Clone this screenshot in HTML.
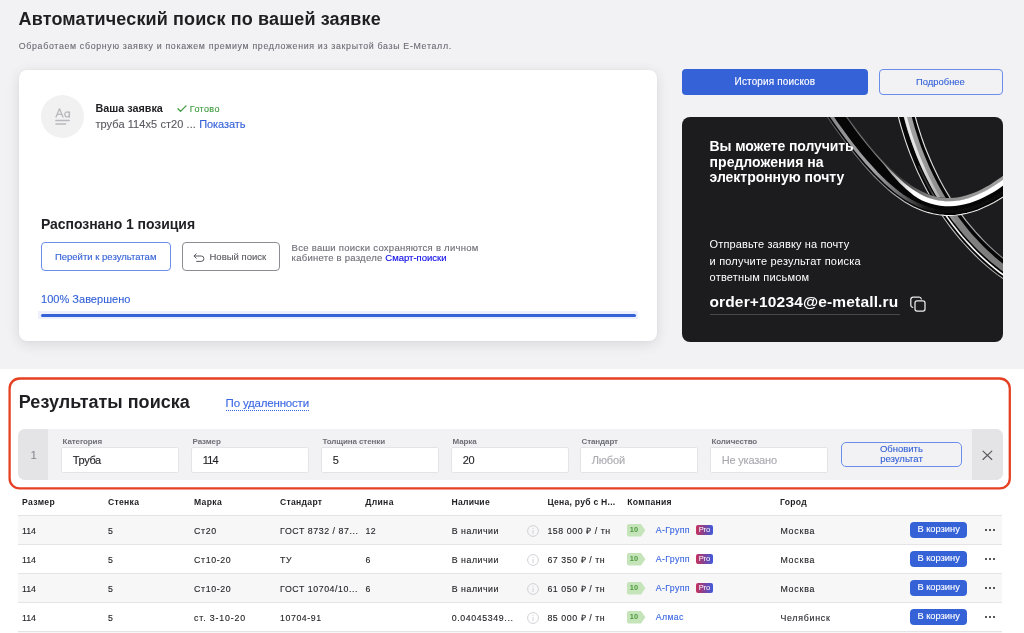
<!DOCTYPE html>
<html lang="ru">
<head>
<meta charset="utf-8">
<title>Автоматический поиск</title>
<style>
*{box-sizing:border-box;margin:0;padding:0}
html,body{width:1024px;height:633px;overflow:hidden}
body{font-family:"Liberation Sans",sans-serif;background:#fff;color:#1f1f23;position:relative}
.abs{position:absolute;white-space:nowrap}
.box{position:absolute}
.k{-webkit-text-stroke:0.12px currentColor}
.row{position:absolute;left:18px;width:984px;height:29px;border-top:1px solid #e4e4e7}
.row.g{background:#f7f7f8}
</style>
</head>
<body>
<div id="w" style="position:absolute;left:0;top:0;width:1024px;height:633px;will-change:transform;opacity:.999">

<div class="box" style="left:0;top:0;width:1024px;height:369px;background:#f2f2f4"></div>
<div class="abs" style="left:18.6px;top:7.86px;font-size:18px;line-height:23px;color:#1f1f23;font-weight:bold;letter-spacing:0.13px;">Автоматический поиск по вашей заявке</div>
<div class="abs k" style="left:18.8px;top:40.85px;font-size:8.8px;line-height:11px;color:#6d6d76;letter-spacing:0.678px;">Обработаем сборную заявку и покажем премиум предложения из закрытой базы Е-Металл.</div>
<div class="box" style="left:18.5px;top:70px;width:638.5px;height:271px;background:#fff;border-radius:8px;box-shadow:0 3px 14px rgba(0,0,0,.11),0 0 2px rgba(0,0,0,.05)"></div>
<div class="box" style="left:41px;top:94.700px;width:43.400px;height:43.400px;border-radius:50%;background:#f1f1f2"></div>
<svg class="abs" style="left:54px;top:106px" width="18" height="20" viewBox="54 106 18 20" fill="none" stroke="#b9b9bd" stroke-width="1.35" stroke-linecap="round" stroke-linejoin="round">
<path d="M56 117 L59.500 108.800 L63 117 M57.200 114.400 H61.800"/>
<path d="M69.400 111.800 V117 M69.400 114.400 A2.300 2.500 0 1 1 64.800 114.400 A2.300 2.500 0 1 1 69.400 114.400"/>
<path d="M55.900 120.500 H69.200 M55.900 124 H65.600" stroke-width="1.4"/>
</svg>
<div class="abs" style="left:95.4px;top:101.46px;font-size:10.8px;line-height:14px;color:#1f1f23;font-weight:bold;letter-spacing:0.01px;">Ваша заявка</div>
<svg class="abs" style="left:176.500px;top:104.500px" width="10" height="8" viewBox="0 0 10 8" fill="none" stroke="#3f9a3f" stroke-width="1.3" stroke-linecap="round" stroke-linejoin="round"><path d="M1 3.800 L3.500 6.400 L9 0.900"/></svg>
<div class="abs k" style="left:189.8px;top:103.38px;font-size:9px;line-height:12px;color:#3f9a3f;letter-spacing:0.367px;">Готово</div>
<div class="abs k" style="left:95.4px;top:117.19px;font-size:11px;line-height:14px;color:#5a5a62;letter-spacing:0.076px;">труба 114х5 ст20 ... <span style="color:#3562d7;letter-spacing:-0.05px">Показать</span></div>
<div class="abs" style="left:41px;top:215.05px;font-size:14px;line-height:18px;color:#1f1f23;font-weight:bold;letter-spacing:-0.055px;">Распознано 1 позиция</div>
<div class="box" style="left:41px;top:242px;width:130.400px;height:29px;border:1px solid #6a8eea;border-radius:4px;background:#fff"></div>
<div class="abs k" style="left:54.9px;top:250.51px;font-size:9.5px;line-height:12px;color:#3562d7;letter-spacing:0.01px;">Перейти к результатам</div>
<div class="box" style="left:182px;top:242px;width:98.200px;height:29px;border:1px solid #8c8c92;border-radius:4px;background:#fff"></div>
<svg class="abs" style="left:193px;top:252.500px" width="12" height="10" viewBox="0 0 12 10" fill="none" stroke="#5a5a62" stroke-width="1" stroke-linecap="round" stroke-linejoin="round"><path d="M3.200 0.800 L1 3 L3.200 5.200 M1.200 3 H8.200 A2.700 2.700 0 0 1 8.200 8.400 H3.600"/></svg>
<div class="abs k" style="left:209.5px;top:250.51px;font-size:9.5px;line-height:12px;color:#5a5a62;letter-spacing:0.01px;">Новый поиск</div>
<div class="abs k" style="left:291.6px;top:242.01px;font-size:9.5px;line-height:12px;color:#6d6d76;letter-spacing:0.267px;">Все ваши поиски сохраняются в личном</div>
<div class="abs k" style="left:291.6px;top:252.11px;font-size:9.5px;line-height:12px;color:#6d6d76;letter-spacing:0.247px;">кабинете в разделе <span style="color:#0a0ae6;letter-spacing:0">Смарт-поиски</span></div>
<div class="abs k" style="left:41px;top:291.99px;font-size:11px;line-height:14px;color:#3562d7;letter-spacing:0.025px;">100% Завершено</div>
<div class="box" style="left:38.400px;top:311.300px;width:599.600px;height:7.500px;background:#edf0fc"></div>
<div class="box" style="left:41px;top:313.800px;width:594.600px;height:3px;background:#3562d7;border-radius:2px"></div>
<div class="box" style="left:682.400px;top:69.100px;width:185.300px;height:25.700px;background:#3562d7;border-radius:4px"></div>
<div class="abs k" style="left:734.6px;top:74.83px;font-size:10px;line-height:13px;color:#fff;letter-spacing:0.14px;">История поисков</div>
<div class="box" style="left:879px;top:69.100px;width:123.500px;height:25.700px;border:1px solid #6a8eea;border-radius:4px"></div>
<div class="abs k" style="left:916.0px;top:75.54px;font-size:9.4px;line-height:12px;color:#3562d7;letter-spacing:0.02px;">Подробнее</div>
<div class="box" style="left:682px;top:116.500px;width:320.500px;height:225.200px;background:#1c1c1e;border-radius:8px;overflow:hidden">
<svg width="321" height="226" viewBox="682 116.500 321 226" style="position:absolute;left:0;top:0">
<defs>
<linearGradient id="aOut" gradientUnits="userSpaceOnUse" x1="830" y1="0" x2="1003" y2="0"><stop offset="0" stop-color="#5a5a5c"/><stop offset="0.3" stop-color="#8a8a8a"/><stop offset="0.5" stop-color="#e0e0e0"/><stop offset="0.65" stop-color="#f4f4f4"/><stop offset="1" stop-color="#e6e6e6"/></linearGradient>
<linearGradient id="aSoft" gradientUnits="userSpaceOnUse" x1="830" y1="0" x2="1003" y2="0"><stop offset="0" stop-color="#8a8a8c"/><stop offset="0.25" stop-color="#a4a4a6"/><stop offset="0.4" stop-color="#6c6c6e"/><stop offset="0.55" stop-color="#1a1a1a"/><stop offset="0.65" stop-color="#0a0a0a"/><stop offset="1" stop-color="#0a0a0a"/></linearGradient>
<linearGradient id="aIn" gradientUnits="userSpaceOnUse" x1="830" y1="0" x2="1003" y2="0"><stop offset="0" stop-color="#5c5c5e"/><stop offset="0.3" stop-color="#858587"/><stop offset="0.4" stop-color="#c8c8c8"/><stop offset="0.48" stop-color="#ffffff"/><stop offset="1" stop-color="#ffffff"/></linearGradient>
<linearGradient id="aTop" gradientUnits="userSpaceOnUse" x1="830" y1="0" x2="1003" y2="0"><stop offset="0" stop-color="#1a1a1a"/><stop offset="0.4" stop-color="#3a3a3a"/><stop offset="0.6" stop-color="#8a8a8a"/><stop offset="1" stop-color="#a0a0a0"/></linearGradient>
<linearGradient id="bOut" gradientUnits="userSpaceOnUse" x1="900" y1="0" x2="1003" y2="0"><stop offset="0" stop-color="#e8e8e8"/><stop offset="0.4" stop-color="#c8c8c8"/><stop offset="1" stop-color="#a8a8a8"/></linearGradient>
<linearGradient id="bWhite" gradientUnits="userSpaceOnUse" x1="900" y1="0" x2="1003" y2="0"><stop offset="0" stop-color="#0a0a0a"/><stop offset="0.3" stop-color="#3a3a3a"/><stop offset="0.45" stop-color="#f4f4f4"/><stop offset="1" stop-color="#ffffff"/></linearGradient>
<linearGradient id="bGray" gradientUnits="userSpaceOnUse" x1="900" y1="0" x2="1003" y2="0"><stop offset="0" stop-color="#a8a8a8"/><stop offset="0.25" stop-color="#989898"/><stop offset="0.5" stop-color="#848484"/><stop offset="1" stop-color="#7a7a7a"/></linearGradient>
<linearGradient id="bHi" gradientUnits="userSpaceOnUse" x1="900" y1="0" x2="1003" y2="0"><stop offset="0" stop-color="#f2f2f2"/><stop offset="0.22" stop-color="#dedede"/><stop offset="0.42" stop-color="#a0a0a0"/><stop offset="0.6" stop-color="#808080"/><stop offset="1" stop-color="#7a7a7a"/></linearGradient>
<linearGradient id="bIn" gradientUnits="userSpaceOnUse" x1="900" y1="0" x2="1003" y2="0"><stop offset="0" stop-color="#f4f4f4"/><stop offset="0.4" stop-color="#d0d0d0"/><stop offset="1" stop-color="#8a8a8a"/></linearGradient>
<filter id="soft" x="-5%" y="-5%" width="110%" height="110%"><feGaussianBlur stdDeviation="0.7"/></filter>
<filter id="soft2" x="-5%" y="-5%" width="110%" height="110%"><feGaussianBlur stdDeviation="0.35"/></filter>
</defs>
<path d="M903.2 100.0 L904.0 104.0 L904.9 108.0 L905.8 112.0 L906.8 115.9 L907.8 119.8 L909.0 124.0 L910.4 128.8 L912.0 133.9 L913.7 139.0 L915.5 144.0 L917.3 149.1 L919.2 154.0 L921.1 158.7 L923.1 163.4 L925.2 168.0 L927.4 172.7 L929.7 177.4 L932.0 182.0 L934.3 186.4 L936.7 190.7 L939.2 195.0 L941.8 199.3 L944.5 203.7 L947.3 208.0 L950.3 212.4 L953.4 216.7 L956.5 221.0 L959.6 225.1 L962.8 229.0 L966.1 233.0 L969.6 237.0 L973.3 241.1 L977.0 245.0 L980.7 248.7 L984.4 252.3 L988.4 256.0 L992.8 259.8 L997.5 263.7 L1002.3 267.5 L1007.3 271.1 L1012.4 274.5 L1017.5 278.0" fill="none" stroke="#060606" stroke-width="17.5"/>
<g filter="url(#soft)"><path d="M900.0 100.7 L900.9 104.7 L901.8 108.7 L902.7 112.7 L903.7 116.7 L904.8 120.6 L906.0 124.9 L907.4 129.7 L909.1 134.8 L910.8 140.0 L912.6 145.1 L914.5 150.1 L916.4 155.1 L918.4 159.9 L920.4 164.6 L922.5 169.2 L924.8 173.9 L927.1 178.7 L929.5 183.3 L931.9 187.8 L934.3 192.1 L936.8 196.4 L939.4 200.8 L942.2 205.1 L945.0 209.5 L948.1 213.9 L951.2 218.3 L954.4 222.6 L957.6 226.7 L960.8 230.7 L964.1 234.7 L967.7 238.7 L971.4 242.8 L975.2 246.7 L978.9 250.5 L982.7 254.1 L986.8 257.8 L991.3 261.7 L996.0 265.6 L1000.9 269.4 L1006.0 273.0 L1011.1 276.4 L1016.2 279.9 L1019.6 274.9 L1014.5 271.4 L1009.4 268.0 L1004.6 264.4 L999.9 260.7 L995.3 256.9 L991.0 253.1 L987.1 249.5 L983.5 245.9 L979.9 242.2 L976.2 238.3 L972.6 234.4 L969.2 230.4 L966.0 226.4 L962.9 222.5 L959.8 218.5 L956.7 214.3 L953.7 210.0 L950.8 205.7 L948.1 201.4 L945.4 197.1 L942.9 192.8 L940.5 188.6 L938.1 184.3 L935.9 180.0 L933.6 175.5 L931.4 170.8 L929.2 166.2 L927.2 161.6 L925.3 157.0 L923.4 152.3 L921.5 147.5 L919.7 142.5 L918.0 137.5 L916.4 132.5 L914.8 127.4 L913.5 122.7 L912.3 118.5 L911.3 114.7 L910.4 110.9 L909.5 107.0 L908.7 103.0 L907.8 99.0Z" fill="url(#bGray)"/>
<path d="M901.9 100.3 L902.7 104.3 L903.6 108.3 L904.5 112.3 L905.5 116.2 L906.5 120.1 L907.7 124.4 L909.1 129.2 L910.7 134.3 L912.4 139.4 L914.2 144.5 L916.0 149.5 L917.9 154.5 L919.9 159.3 L921.9 163.9 L924.0 168.6 L926.2 173.3 L928.5 178.0 L930.8 182.6 L933.2 187.1 L935.5 191.4 L938.0 195.7 L940.6 200.0 L943.3 204.4 L946.2 208.7 L949.2 213.1 L952.3 217.5 L955.4 221.8" fill="none" stroke="url(#bHi)" stroke-width="2.8000000000000007"/></g>
<g filter="url(#soft2)">
<path d="M895.2 101.7 L896.0 105.7 L896.9 109.8 L897.8 113.9 L898.8 117.9 L899.9 122.0 L901.1 126.3 L902.6 131.2 L904.2 136.4 L905.9 141.6 L907.7 146.8 L909.6 152.0 L911.6 157.0 L913.6 161.9 L915.6 166.7 L917.7 171.4 L920.0 176.2 L922.3 181.0 L924.7 185.8 L927.1 190.3 L929.6 194.7 L932.1 199.2 L934.8 203.6 L937.6 208.1 L940.5 212.5 L943.5 217.0 L946.7 221.5 L949.9 225.9 L953.2 230.1 L956.4 234.2 L959.9 238.3 L963.5 242.5 L967.3 246.6 L971.1 250.7 L974.9 254.5 L978.8 258.3 L982.9 262.1 L987.5 266.1 L992.3 270.1 L997.4 274.1 L1002.6 277.8 L1007.8 281.3 L1012.9 284.8" fill="none" stroke="url(#bOut)" stroke-width="1.1"/>
<path d="M918.6 165.4 L920.7 170.1 L922.9 174.8 L925.2 179.6 L927.6 184.3 L930.0 188.8 L932.4 193.1 L934.9 197.5 L937.6 201.9 L940.3 206.3 L943.2 210.7 L946.2 215.2 L949.3 219.6 L952.5 224.0 L955.7 228.1 L959.0 232.2 L962.3 236.2 L965.9 240.3 L969.7 244.4 L973.4 248.4 L977.2 252.2 L981.0 255.9 L985.1 259.7 L989.6 263.6 L994.4 267.6 L999.3 271.5 L1004.4 275.1 L1009.6 278.6 L1014.7 282.1" fill="none" stroke="url(#bWhite)" stroke-width="1.5999999999999996"/>
<path d="M911.2 98.3 L912.0 102.3 L912.8 106.3 L913.7 110.1 L914.7 113.9 L915.7 117.6 L916.8 121.7 L918.2 126.4 L919.8 131.4 L921.4 136.4 L923.1 141.3 L924.9 146.2 L926.8 151.0 L928.7 155.6 L930.6 160.1 L932.6 164.6 L934.8 169.2 L937.0 173.8 L939.2 178.3 L941.5 182.5 L943.8 186.7 L946.2 190.9 L948.8 195.1 L951.4 199.3 L954.1 203.5 L957.0 207.7 L960.0 212.0 L963.0 216.1 L966.0 220.1 L969.1 223.9 L972.3 227.7 L975.7 231.6 L979.3 235.5 L982.9 239.3 L986.4 242.9 L990.0 246.4 L993.8 249.9 L998.1 253.6 L1002.6 257.4 L1007.2 261.0 L1011.9 264.4 L1017.0 267.8 L1022.1 271.3" fill="none" stroke="url(#bIn)" stroke-width="1.1999999999999993"/>
</g>
<path d="M826.0 99.1 L828.6 103.0 L831.3 107.0 L834.0 111.0 L836.8 115.1 L839.7 119.4 L843.0 124.0 L846.8 129.3 L851.0 134.9 L855.0 140.3 L858.6 145.0 L862.1 149.4 L866.0 154.0 L870.5 159.2 L875.3 164.6 L880.0 169.6 L884.4 174.1 L888.8 178.2 L893.0 182.0 L897.1 185.4 L901.0 188.5 L905.0 191.4 L909.0 194.0 L912.9 196.4 L917.0 198.6 L921.2 200.6 L925.5 202.3 L930.0 203.8 L934.9 205.0 L939.9 206.0 L945.0 206.5 L950.0 206.6 L955.0 206.3 L960.0 205.6 L965.0 204.6 L970.0 203.2 L975.0 201.5 L980.1 199.4 L985.2 197.0 L990.0 194.5 L994.2 192.1 L998.1 189.6 L1002.0 187.0 L1006.0 184.1 L1010.0 181.1 L1014.0 178.1" fill="none" stroke="#060606" stroke-width="18"/>
<g filter="url(#soft)">
<path d="M822.1 101.7 L824.7 105.6 L827.4 109.6 L830.1 113.6 L832.9 117.8 L835.9 122.1 L839.2 126.7 L843.0 132.1 L847.2 137.7 L851.3 143.2 L854.9 147.9 L858.5 152.4 L862.4 157.0 L867.0 162.3 L871.8 167.7 L876.6 172.9 L881.2 177.4 L885.6 181.7 L889.9 185.5 L894.1 189.1 L898.2 192.3 L902.3 195.3 L906.4 198.0 L910.6 200.5 L914.9 202.8 L919.3 204.9 L923.9 206.7 L928.7 208.3 L933.9 209.6 L939.2 210.6 L944.7 211.2 L950.1 211.3 L955.5 210.9 L960.8 210.2 L966.1 209.1 L971.4 207.7 L976.7 205.9 L982.0 203.7 L987.3 201.2 L992.2 198.6 L996.6 196.1 L1000.7 193.6 L1004.7 190.9 L1008.8 187.9 L1012.8 184.9 L1016.8 181.9" fill="none" stroke="url(#aSoft)" stroke-width="3.4"/>
<path d="M832.2 94.9 L834.9 98.9 L837.5 102.8 L840.2 106.8 L843.0 110.9 L845.9 115.1 L849.1 119.6 L852.9 124.9 L857.0 130.5 L861.0 135.8 L864.5 140.4 L868.0 144.6 L871.7 149.1 L876.1 154.3 L880.6 159.7 L885.1 164.7 L889.2 169.2 L893.3 173.3 L897.3 177.1 L901.1 180.5 L904.8 183.6 L908.5 186.4 L912.1 189.0 L915.8 191.4 L919.5 193.5 L923.4 195.5 L927.3 197.3 L931.5 198.6 L936.0 199.7 L940.7 200.6 L945.3 201.1 L949.9 201.2 L954.5 200.9 L959.1 200.3 L963.7 199.3 L968.4 198.0 L973.1 196.4 L977.9 194.5 L982.8 192.1 L987.4 189.8 L991.4 187.5 L995.2 185.1 L998.9 182.6 L1002.8 179.8 L1006.7 176.8 L1010.7 173.8 L1008.6 170.9 L1004.6 173.9 L1000.7 176.9 L996.9 179.6 L993.2 182.1 L989.6 184.4 L985.7 186.6 L981.2 188.9 L976.5 191.2 L971.8 193.1 L967.4 194.6 L962.9 195.8 L958.5 196.7 L954.1 197.3 L949.8 197.6 L945.6 197.5 L941.2 197.1 L936.8 196.2 L932.5 195.2 L928.6 193.9 L924.8 192.3 L921.0 190.6 L917.4 188.6 L913.8 186.4 L910.1 184.0 L906.4 181.3 L902.8 178.5 L898.9 175.2 L894.9 171.6 L890.7 167.7 L886.5 163.4 L881.9 158.5 L877.2 153.2 L872.9 148.2 L869.1 143.7 L865.7 139.4 L862.2 134.8 L858.2 129.6 L854.1 124.0 L850.3 118.8 L847.1 114.2 L844.2 110.0 L841.4 105.9 L838.7 101.9 L836.1 98.0 L833.5 94.1Z" fill="url(#aTop)"/>
</g>
<g filter="url(#soft2)">
<path d="M819.0 103.8 L821.6 107.7 L824.3 111.7 L827.0 115.7 L829.8 119.9 L832.8 124.2 L836.1 128.9 L840.0 134.3 L844.2 140.0 L848.3 145.4 L852.0 150.2 L855.6 154.7 L859.6 159.5 L864.1 164.8 L869.1 170.3 L873.9 175.5 L878.5 180.1 L883.0 184.4 L887.4 188.4 L891.7 192.0 L896.0 195.3 L900.2 198.3 L904.4 201.2 L908.8 203.8 L913.2 206.2 L917.8 208.3 L922.6 210.3 L927.7 211.9 L933.1 213.3 L938.7 214.3 L944.5 214.9 L950.2 215.0 L955.8 214.7 L961.4 213.9 L967.0 212.8 L972.5 211.3 L978.0 209.4 L983.5 207.1 L989.0 204.5 L994.0 201.9 L998.6 199.3 L1002.7 196.7 L1006.8 193.9 L1011.0 190.9 L1015.1 187.9 L1019.1 184.8" fill="none" stroke="url(#aOut)" stroke-width="1.1"/>
<path d="M831.6 95.3 L834.3 99.2 L836.9 103.2 L839.6 107.2 L842.4 111.3 L845.3 115.5 L848.5 120.0 L852.3 125.3 L856.4 130.9 L860.4 136.2 L864.0 140.8 L867.4 145.1 L871.2 149.6 L875.6 154.7 L880.3 160.0 L884.7 165.0 L888.6 169.9 L892.3 174.4 L896.0 178.6 L899.6 182.4 L903.1 185.8 L906.6 189.1 L910.2 192.1 L913.8 194.9 L917.6 197.5 L921.5 199.8 L925.8 201.6 L930.2 203.0 L935.0 204.2 L940.0 205.2 L945.0 205.7 L950.0 205.8 L954.9 205.5 L959.9 204.8 L964.8 203.8 L969.8 202.4 L974.7 200.8 L979.8 198.7 L984.9 196.3 L989.6 193.8 L993.8 191.4 L997.7 189.0 L1001.5 186.3 L1005.5 183.5 L1009.5 180.5 L1013.5 177.5 L1010.5 173.5 L1006.5 176.5 L1002.6 179.5 L998.7 182.2 L994.9 184.8 L991.2 187.1 L987.2 189.4 L982.6 191.8 L977.8 194.1 L973.0 196.1 L968.3 197.7 L963.6 198.9 L959.0 199.9 L954.4 200.5 L949.9 200.8 L945.4 200.7 L940.8 200.2 L936.1 199.4 L931.6 198.2 L927.5 196.9 L923.5 195.3 L919.7 193.3 L916.0 191.1 L912.4 188.7 L908.7 186.0 L905.1 183.2 L901.4 180.1 L897.7 176.6 L893.8 172.8 L889.7 168.7 L885.6 164.2 L881.1 159.2 L876.4 154.0 L872.0 148.9 L868.3 144.4 L864.8 140.1 L861.3 135.5 L857.3 130.2 L853.2 124.6 L849.4 119.4 L846.2 114.9 L843.3 110.7 L840.5 106.6 L837.8 102.5 L835.2 98.6 L832.6 94.7Z" fill="url(#aIn)"/>
</g>
</svg>
</div>
<div class="abs" style="left:709.6px;top:137.15px;font-size:14px;line-height:18px;color:#fff;font-weight:bold;letter-spacing:-0.096px;">Вы можете получить</div>
<div class="abs" style="left:709.6px;top:152.55px;font-size:14px;line-height:18px;color:#fff;font-weight:bold;letter-spacing:0.025px;">предложения на</div>
<div class="abs" style="left:709.6px;top:168.15px;font-size:14px;line-height:18px;color:#fff;font-weight:bold;letter-spacing:-0.034px;">электронную почту</div>
<div class="abs" style="left:709.6px;top:237.09px;font-size:11px;line-height:14px;color:#fff;letter-spacing:0.127px;">Отправьте заявку на почту</div>
<div class="abs" style="left:709.6px;top:253.69px;font-size:11px;line-height:14px;color:#fff;letter-spacing:0.183px;">и получите результат поиска</div>
<div class="abs" style="left:709.6px;top:270.09px;font-size:11px;line-height:14px;color:#fff;letter-spacing:0.187px;">ответным письмом</div>
<div class="abs" style="left:709.4px;top:292.43px;font-size:15.5px;line-height:20px;color:#fff;font-weight:bold;letter-spacing:0.162px;">order+10234@e-metall.ru</div>
<div class="box" style="left:709.6px;top:313.9px;width:190px;height:1px;background:#48484c"></div>
<svg class="abs" style="left:909px;top:295px" width="18" height="18" viewBox="909 295 18 18" fill="none" stroke="#ececec" stroke-width="1.250" stroke-linejoin="round" stroke-linecap="round">
<rect x="915" y="300.800" width="10" height="10.300" rx="2.100"/>
<path d="M921.300 299 A2.200 2.200 0 0 0 919.200 297 H913.300 A2.500 2.500 0 0 0 910.800 299.500 V305.200 A2.200 2.200 0 0 0 912.700 307.300"/>
</svg>
<svg class="abs" style="left:0;top:370px" width="1024" height="125" viewBox="0 370 1024 125"><rect x="9.600" y="378.500" width="1000.200" height="109.900" rx="10" fill="none" stroke="#e64023" stroke-width="2.300"/></svg>
<div class="abs" style="left:18.8px;top:391.46px;font-size:18px;line-height:23px;color:#1f1f23;font-weight:bold;letter-spacing:0.015px;">Результаты поиска</div>
<div class="abs k" style="left:225.6px;top:395.81px;font-size:11.5px;line-height:15px;color:#3b67e2;letter-spacing:-0.19px;">По удаленности</div>
<div class="box" style="left:225.600px;top:409.700px;width:83.200px;height:0;border-top:1px dotted #3b67e2"></div>
<div class="box" style="left:18px;top:429px;width:984.500px;height:51px;background:#f2f2f4;border-radius:7px;overflow:hidden"><div style="position:absolute;left:0;top:0;width:30.300px;height:51px;background:#e4e4e6"></div><div style="position:absolute;left:953.700px;top:0;width:31px;height:51px;background:#e4e4e6"></div></div>
<div class="abs" style="left:30.6px;top:447.91px;font-size:11.5px;line-height:15px;color:#84848c;">1</div>
<svg class="abs" style="left:981px;top:449px" width="13" height="13" viewBox="981 449 13 13" fill="none" stroke="#55555c" stroke-width="1.1" stroke-linecap="round"><path d="M983 451.200 L991.800 459.500 M991.800 451.200 L983 459.500"/></svg>
<div class="abs" style="left:62.5px;top:436.83px;font-size:8px;line-height:10px;color:#6f6f78;font-weight:bold;letter-spacing:-0.1px;">Категория</div>
<div class="box" style="left:61px;top:447.300px;width:118px;height:25.400px;background:#fff;border:1px solid #e4e4e8;border-radius:2px"></div>
<div class="abs k" style="left:72.8px;top:453.19px;font-size:11px;line-height:14px;color:#1f1f23;letter-spacing:-0.36px;">Труба</div>
<div class="abs" style="left:192.5px;top:436.83px;font-size:8px;line-height:10px;color:#6f6f78;font-weight:bold;letter-spacing:-0.1px;">Размер</div>
<div class="box" style="left:191px;top:447.300px;width:118px;height:25.400px;background:#fff;border:1px solid #e4e4e8;border-radius:2px"></div>
<div class="abs k" style="left:202.8px;top:453.19px;font-size:11px;line-height:14px;color:#1f1f23;letter-spacing:-0.9px;">114</div>
<div class="abs" style="left:322.5px;top:436.83px;font-size:8px;line-height:10px;color:#6f6f78;font-weight:bold;letter-spacing:-0.1px;">Толщина стенки</div>
<div class="box" style="left:321px;top:447.300px;width:118px;height:25.400px;background:#fff;border:1px solid #e4e4e8;border-radius:2px"></div>
<div class="abs k" style="left:332.8px;top:453.19px;font-size:11px;line-height:14px;color:#1f1f23;letter-spacing:-0.3px;">5</div>
<div class="abs" style="left:452.5px;top:436.83px;font-size:8px;line-height:10px;color:#6f6f78;font-weight:bold;letter-spacing:-0.1px;">Марка</div>
<div class="box" style="left:451px;top:447.300px;width:118px;height:25.400px;background:#fff;border:1px solid #e4e4e8;border-radius:2px"></div>
<div class="abs k" style="left:462.8px;top:453.19px;font-size:11px;line-height:14px;color:#1f1f23;letter-spacing:-0.3px;">20</div>
<div class="abs" style="left:581.5px;top:436.83px;font-size:8px;line-height:10px;color:#6f6f78;font-weight:bold;letter-spacing:-0.1px;">Стандарт</div>
<div class="box" style="left:580px;top:447.300px;width:118px;height:25.400px;background:#fff;border:1px solid #e4e4e8;border-radius:2px"></div>
<div class="abs k" style="left:591.8px;top:453.19px;font-size:11px;line-height:14px;color:#a9a9b0;letter-spacing:-0.2px;">Любой</div>
<div class="abs" style="left:711.5px;top:436.83px;font-size:8px;line-height:10px;color:#6f6f78;font-weight:bold;letter-spacing:-0.1px;">Количество</div>
<div class="box" style="left:710px;top:447.300px;width:118px;height:25.400px;background:#fff;border:1px solid #e4e4e8;border-radius:2px"></div>
<div class="abs k" style="left:721.8px;top:453.19px;font-size:11px;line-height:14px;color:#a9a9b0;letter-spacing:-0.2px;">Не указано</div>
<div class="box" style="left:840.600px;top:442.300px;width:121.700px;height:24.500px;border:1px solid #6a8eea;border-radius:5px"></div>
<div class="abs k" style="left:879.9px;top:443.31px;font-size:9.5px;line-height:12px;color:#3562d7;">Обновить</div>
<div class="abs k" style="left:880.2px;top:453.41px;font-size:9.5px;line-height:12px;color:#3562d7;">результат</div>
<div class="abs" style="left:22.0px;top:496.72px;font-size:8.6px;line-height:11px;color:#1f1f23;font-weight:bold;letter-spacing:0.36px;">Размер</div>
<div class="abs" style="left:108.0px;top:496.72px;font-size:8.6px;line-height:11px;color:#1f1f23;font-weight:bold;letter-spacing:0.3px;">Стенка</div>
<div class="abs" style="left:194.0px;top:496.72px;font-size:8.6px;line-height:11px;color:#1f1f23;font-weight:bold;letter-spacing:0.33px;">Марка</div>
<div class="abs" style="left:280.0px;top:496.72px;font-size:8.6px;line-height:11px;color:#1f1f23;font-weight:bold;letter-spacing:0.3px;">Стандарт</div>
<div class="abs" style="left:365.2px;top:496.72px;font-size:8.6px;line-height:11px;color:#1f1f23;font-weight:bold;letter-spacing:0.35px;">Длина</div>
<div class="abs" style="left:451.5px;top:496.72px;font-size:8.6px;line-height:11px;color:#1f1f23;font-weight:bold;letter-spacing:0.23px;">Наличие</div>
<div class="abs" style="left:547.4px;top:496.72px;font-size:8.6px;line-height:11px;color:#1f1f23;font-weight:bold;letter-spacing:0.25px;">Цена, руб с Н...</div>
<div class="abs" style="left:627.2px;top:496.72px;font-size:8.6px;line-height:11px;color:#1f1f23;font-weight:bold;letter-spacing:0.32px;">Компания</div>
<div class="abs" style="left:780.1px;top:496.72px;font-size:8.6px;line-height:11px;color:#1f1f23;font-weight:bold;letter-spacing:0.27px;">Город</div>
<div class="row g" style="top:515.0px"></div>
<div class="abs k" style="left:22.1px;top:525.85px;font-size:8.8px;line-height:11px;color:#1f1f23;letter-spacing:-0.14px;">114</div>
<div class="abs k" style="left:108.1px;top:525.85px;font-size:8.8px;line-height:11px;color:#1f1f23;">5</div>
<div class="abs k" style="left:194.10000000000002px;top:525.85px;font-size:8.8px;line-height:11px;color:#1f1f23;letter-spacing:0.6px;">Ст20</div>
<div class="abs k" style="left:280.1px;top:525.85px;font-size:8.8px;line-height:11px;color:#1f1f23;letter-spacing:0.55px;">ГОСТ 8732 / 87...</div>
<div class="abs k" style="left:365.5px;top:525.85px;font-size:8.8px;line-height:11px;color:#1f1f23;letter-spacing:0.3px;">12</div>
<div class="abs k" style="left:451.8px;top:525.85px;font-size:8.8px;line-height:11px;color:#1f1f23;letter-spacing:0.508px;">В наличии</div>
<svg class="abs" style="left:525.7px;top:524.3px" width="14" height="14" viewBox="-7 -7 14 14" fill="none" stroke="#d2d2d7" stroke-width="1"><circle cx="0" cy="0" r="5.400"/><path d="M0 -0.600 V2.700 M0 -2.800 V-2.400" stroke-linecap="round"/></svg>
<div class="abs k" style="left:547.4px;top:525.85px;font-size:8.8px;line-height:11px;color:#1f1f23;letter-spacing:0.56px;">158 000 ₽ / тн</div>
<svg class="abs" style="left:627.200px;top:524.2px" width="19" height="13" viewBox="0 0 19 13"><path d="M1.800 0 H14 L18.400 6.300 L14 12.600 H1.800 A1.800 1.800 0 0 1 0 10.800 V1.800 A1.800 1.800 0 0 1 1.800 0 Z" fill="#c6e4ba"/></svg>
<div class="abs" style="left:629.8px;top:525.03px;font-size:7.4px;line-height:10px;color:#4a9a3c;font-weight:bold;">10</div>
<div class="abs k" style="left:655.7px;top:524.95px;font-size:8.8px;line-height:11px;color:#3b67e2;letter-spacing:0.36px;">А-Групп</div>
<div class="box" style="left:696.100px;top:524.9px;width:16.800px;height:10.600px;border-radius:2px;background:linear-gradient(90deg,#c6325e,#7a469e 55%,#3f5bdc)"></div>
<div class="abs" style="left:698.7px;top:525.17px;font-size:7.6px;line-height:10px;color:#fff;letter-spacing:-0.15px;">Pro</div>
<div class="abs k" style="left:780.4px;top:525.85px;font-size:8.8px;line-height:11px;color:#1f1f23;letter-spacing:0.8px;">Москва</div>
<div class="box" style="left:910.100px;top:522px;width:57.100px;height:16.200px;background:#3562d7;border-radius:4px"></div>
<div class="abs k" style="left:917.4px;top:523.18px;font-size:9.3px;line-height:12px;color:#fff;">В корзину</div>
<div class="box" style="left:984.9px;top:528.6px;width:2.300px;height:2.300px;border-radius:50%;background:#1f1f23"></div>
<div class="box" style="left:988.8px;top:528.6px;width:2.300px;height:2.300px;border-radius:50%;background:#1f1f23"></div>
<div class="box" style="left:992.7px;top:528.6px;width:2.300px;height:2.300px;border-radius:50%;background:#1f1f23"></div>
<div class="row" style="top:544.0px"></div>
<div class="abs k" style="left:22.1px;top:554.85px;font-size:8.8px;line-height:11px;color:#1f1f23;letter-spacing:-0.14px;">114</div>
<div class="abs k" style="left:108.1px;top:554.85px;font-size:8.8px;line-height:11px;color:#1f1f23;">5</div>
<div class="abs k" style="left:194.10000000000002px;top:554.85px;font-size:8.8px;line-height:11px;color:#1f1f23;letter-spacing:0.6px;">Ст10-20</div>
<div class="abs k" style="left:280.1px;top:554.85px;font-size:8.8px;line-height:11px;color:#1f1f23;letter-spacing:0.55px;">ТУ</div>
<div class="abs k" style="left:365.5px;top:554.85px;font-size:8.8px;line-height:11px;color:#1f1f23;letter-spacing:0.3px;">6</div>
<div class="abs k" style="left:451.8px;top:554.85px;font-size:8.8px;line-height:11px;color:#1f1f23;letter-spacing:0.508px;">В наличии</div>
<svg class="abs" style="left:525.7px;top:553.3px" width="14" height="14" viewBox="-7 -7 14 14" fill="none" stroke="#d2d2d7" stroke-width="1"><circle cx="0" cy="0" r="5.400"/><path d="M0 -0.600 V2.700 M0 -2.800 V-2.400" stroke-linecap="round"/></svg>
<div class="abs k" style="left:547.4px;top:554.85px;font-size:8.8px;line-height:11px;color:#1f1f23;letter-spacing:0.56px;">67 350 ₽ / тн</div>
<svg class="abs" style="left:627.200px;top:553.2px" width="19" height="13" viewBox="0 0 19 13"><path d="M1.800 0 H14 L18.400 6.300 L14 12.600 H1.800 A1.800 1.800 0 0 1 0 10.800 V1.800 A1.800 1.800 0 0 1 1.800 0 Z" fill="#c6e4ba"/></svg>
<div class="abs" style="left:629.8px;top:554.03px;font-size:7.4px;line-height:10px;color:#4a9a3c;font-weight:bold;">10</div>
<div class="abs k" style="left:655.7px;top:553.95px;font-size:8.8px;line-height:11px;color:#3b67e2;letter-spacing:0.36px;">А-Групп</div>
<div class="box" style="left:696.100px;top:553.9px;width:16.800px;height:10.600px;border-radius:2px;background:linear-gradient(90deg,#c6325e,#7a469e 55%,#3f5bdc)"></div>
<div class="abs" style="left:698.7px;top:554.17px;font-size:7.6px;line-height:10px;color:#fff;letter-spacing:-0.15px;">Pro</div>
<div class="abs k" style="left:780.4px;top:554.85px;font-size:8.8px;line-height:11px;color:#1f1f23;letter-spacing:0.8px;">Москва</div>
<div class="box" style="left:910.100px;top:551px;width:57.100px;height:16.200px;background:#3562d7;border-radius:4px"></div>
<div class="abs k" style="left:917.4px;top:552.18px;font-size:9.3px;line-height:12px;color:#fff;">В корзину</div>
<div class="box" style="left:984.9px;top:557.6px;width:2.300px;height:2.300px;border-radius:50%;background:#1f1f23"></div>
<div class="box" style="left:988.8px;top:557.6px;width:2.300px;height:2.300px;border-radius:50%;background:#1f1f23"></div>
<div class="box" style="left:992.7px;top:557.6px;width:2.300px;height:2.300px;border-radius:50%;background:#1f1f23"></div>
<div class="row g" style="top:573.0px"></div>
<div class="abs k" style="left:22.1px;top:583.85px;font-size:8.8px;line-height:11px;color:#1f1f23;letter-spacing:-0.14px;">114</div>
<div class="abs k" style="left:108.1px;top:583.85px;font-size:8.8px;line-height:11px;color:#1f1f23;">5</div>
<div class="abs k" style="left:194.10000000000002px;top:583.85px;font-size:8.8px;line-height:11px;color:#1f1f23;letter-spacing:0.6px;">Ст10-20</div>
<div class="abs k" style="left:280.1px;top:583.85px;font-size:8.8px;line-height:11px;color:#1f1f23;letter-spacing:0.55px;">ГОСТ 10704/10...</div>
<div class="abs k" style="left:365.5px;top:583.85px;font-size:8.8px;line-height:11px;color:#1f1f23;letter-spacing:0.3px;">6</div>
<div class="abs k" style="left:451.8px;top:583.85px;font-size:8.8px;line-height:11px;color:#1f1f23;letter-spacing:0.508px;">В наличии</div>
<svg class="abs" style="left:525.7px;top:582.3px" width="14" height="14" viewBox="-7 -7 14 14" fill="none" stroke="#d2d2d7" stroke-width="1"><circle cx="0" cy="0" r="5.400"/><path d="M0 -0.600 V2.700 M0 -2.800 V-2.400" stroke-linecap="round"/></svg>
<div class="abs k" style="left:547.4px;top:583.85px;font-size:8.8px;line-height:11px;color:#1f1f23;letter-spacing:0.56px;">61 050 ₽ / тн</div>
<svg class="abs" style="left:627.200px;top:582.2px" width="19" height="13" viewBox="0 0 19 13"><path d="M1.800 0 H14 L18.400 6.300 L14 12.600 H1.800 A1.800 1.800 0 0 1 0 10.800 V1.800 A1.800 1.800 0 0 1 1.800 0 Z" fill="#c6e4ba"/></svg>
<div class="abs" style="left:629.8px;top:583.03px;font-size:7.4px;line-height:10px;color:#4a9a3c;font-weight:bold;">10</div>
<div class="abs k" style="left:655.7px;top:582.95px;font-size:8.8px;line-height:11px;color:#3b67e2;letter-spacing:0.36px;">А-Групп</div>
<div class="box" style="left:696.100px;top:582.9px;width:16.800px;height:10.600px;border-radius:2px;background:linear-gradient(90deg,#c6325e,#7a469e 55%,#3f5bdc)"></div>
<div class="abs" style="left:698.7px;top:583.17px;font-size:7.6px;line-height:10px;color:#fff;letter-spacing:-0.15px;">Pro</div>
<div class="abs k" style="left:780.4px;top:583.85px;font-size:8.8px;line-height:11px;color:#1f1f23;letter-spacing:0.8px;">Москва</div>
<div class="box" style="left:910.100px;top:580px;width:57.100px;height:16.200px;background:#3562d7;border-radius:4px"></div>
<div class="abs k" style="left:917.4px;top:581.18px;font-size:9.3px;line-height:12px;color:#fff;">В корзину</div>
<div class="box" style="left:984.9px;top:586.6px;width:2.300px;height:2.300px;border-radius:50%;background:#1f1f23"></div>
<div class="box" style="left:988.8px;top:586.6px;width:2.300px;height:2.300px;border-radius:50%;background:#1f1f23"></div>
<div class="box" style="left:992.7px;top:586.6px;width:2.300px;height:2.300px;border-radius:50%;background:#1f1f23"></div>
<div class="row" style="top:602.0px"></div>
<div class="abs k" style="left:22.1px;top:612.85px;font-size:8.8px;line-height:11px;color:#1f1f23;letter-spacing:-0.14px;">114</div>
<div class="abs k" style="left:108.1px;top:612.85px;font-size:8.8px;line-height:11px;color:#1f1f23;">5</div>
<div class="abs k" style="left:194.10000000000002px;top:612.85px;font-size:8.8px;line-height:11px;color:#1f1f23;letter-spacing:0.85px;">ст. 3-10-20</div>
<div class="abs k" style="left:280.1px;top:612.85px;font-size:8.8px;line-height:11px;color:#1f1f23;letter-spacing:0.55px;">10704-91</div>
<div class="abs k" style="left:451.8px;top:612.85px;font-size:8.8px;line-height:11px;color:#1f1f23;letter-spacing:0.607px;">0.04045349...</div>
<svg class="abs" style="left:525.7px;top:611.3px" width="14" height="14" viewBox="-7 -7 14 14" fill="none" stroke="#d2d2d7" stroke-width="1"><circle cx="0" cy="0" r="5.400"/><path d="M0 -0.600 V2.700 M0 -2.800 V-2.400" stroke-linecap="round"/></svg>
<div class="abs k" style="left:547.4px;top:612.85px;font-size:8.8px;line-height:11px;color:#1f1f23;letter-spacing:0.56px;">85 000 ₽ / тн</div>
<svg class="abs" style="left:627.200px;top:611.2px" width="19" height="13" viewBox="0 0 19 13"><path d="M1.800 0 H14 L18.400 6.300 L14 12.600 H1.800 A1.800 1.800 0 0 1 0 10.800 V1.800 A1.800 1.800 0 0 1 1.800 0 Z" fill="#c6e4ba"/></svg>
<div class="abs" style="left:629.8px;top:612.03px;font-size:7.4px;line-height:10px;color:#4a9a3c;font-weight:bold;">10</div>
<div class="abs k" style="left:655.7px;top:611.95px;font-size:8.8px;line-height:11px;color:#3b67e2;letter-spacing:0.36px;">Алмас</div>
<div class="abs k" style="left:780.4px;top:612.85px;font-size:8.8px;line-height:11px;color:#1f1f23;letter-spacing:0.74px;">Челябинск</div>
<div class="box" style="left:910.100px;top:609px;width:57.100px;height:16.200px;background:#3562d7;border-radius:4px"></div>
<div class="abs k" style="left:917.4px;top:610.18px;font-size:9.3px;line-height:12px;color:#fff;">В корзину</div>
<div class="box" style="left:984.9px;top:615.6px;width:2.300px;height:2.300px;border-radius:50%;background:#1f1f23"></div>
<div class="box" style="left:988.8px;top:615.6px;width:2.300px;height:2.300px;border-radius:50%;background:#1f1f23"></div>
<div class="box" style="left:992.7px;top:615.6px;width:2.300px;height:2.300px;border-radius:50%;background:#1f1f23"></div>
<div class="row g" style="top:631px;height:2px"></div>
</div>
</body>
</html>
